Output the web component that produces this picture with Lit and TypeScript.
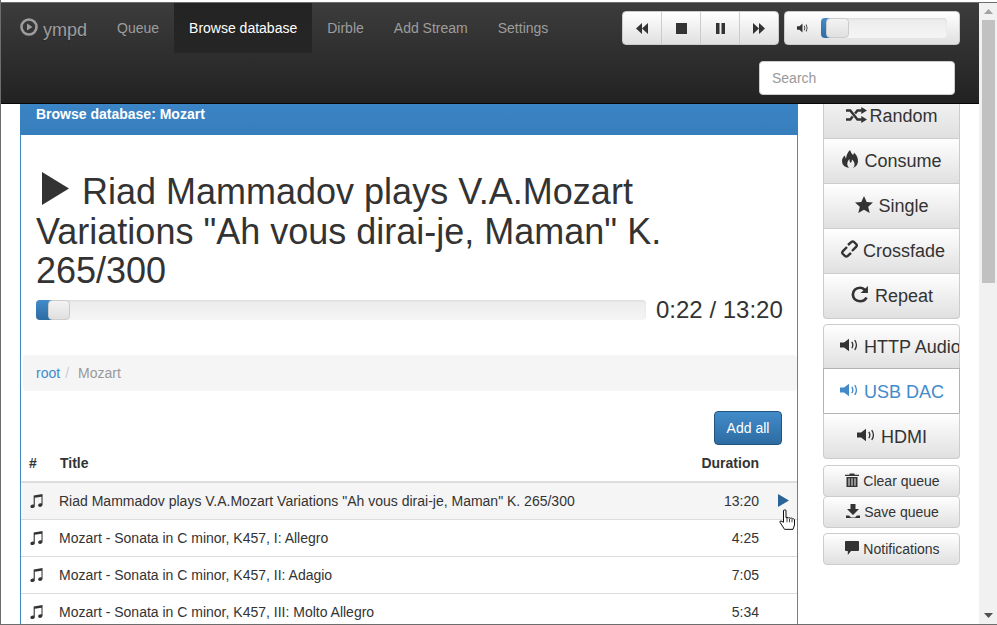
import { LitElement, html, css, svg } from "lit";
import { customElement } from "lit/decorators.js";

const ic = (vb: string, d: any, cls = "") => html`<svg class="ic ${cls}" viewBox="${vb}" fill="currentColor" preserveAspectRatio="none">${d}</svg>`;
const speaker = ic("0 0 16 14", svg`<path d="M0 4.500h3.600L8 .8v12.400L3.600 9.500H0z"/><path d="M10 4.200q1.600 2.800 0 5.600l1 .6q2-3.400 0-6.800zM12.600 2.400q2.800 4.600 0 9.200l1 .7q3.200-5.300 0-10.600z"/>`);
const play = ic("0 0 14 14", svg`<path d="M0 0L14 7L0 14z"/>`);
const shuffle = ic("0 0 22 16", svg`<g fill="none" stroke="currentColor" stroke-width="2.600"><path d="M0 3.500h4.500l7.500 9h4.500"/><path d="M0 12.500h4.500l2.500-3M9.500 6.500l2.500-3h4.500"/></g><path d="M16 0l6 3.500L16 7zM16 9l6 3.500L16 16z"/>`, "shuf");
const flame = ic("0 0 16 18", svg`<path d="M8 0q1 3 3 5 1-1 1-2.500 4 4 4 8.500 0 5-5 7 2-2 1.500-4.500Q12 11 10 9.500 10 12 8.500 13 7 11.500 7.500 9 5 11 5.200 14q.2 2.200 1.800 4Q0 16.500 0 11 0 7.500 3 5.500q0 2 1 3 .5-5 4-8.500z"/>`, "flame");
const star = ic("0 0 18 17", svg`<path d="M9 0l2.700 6 6.300.6-4.800 4.200 1.500 6.200L9 13.700 3.300 17l1.500-6.200L0 6.600 6.300 6z"/>`, "star");
const link = ic("0 0 17 18", svg`<g fill="none" stroke="currentColor" stroke-width="2.400"><path d="M7 5L10.500 1.900q1.200-1 2.400 0L15.300 4.200q1 1.200 0 2.400L11 11"/><path d="M10 13L6.500 16.100q-1.200 1-2.400 0L1.700 13.800q-1-1.200 0-2.400L6 7"/></g>`, "link");
const repeat = ic("0 0 17 18", svg`<path d="M8.500 1.500q3 0 5 2L16 1v7h-7l2.700-2.600Q10.300 4 8.500 4 3.500 4.300 3 9.500q.5 5.200 5.500 5.500 3.500 0 5-3l2.300 1Q13.800 17.500 8.500 17.500 1 17 .5 9.500 1 2 8.500 1.500z"/>`, "rep");
const trash = ic("0 0 14 16", svg`<path d="M4.500 2V.5h5V2H14v1.500H0V2zM1.500 4.500h11V16h-11zM3.500 6v8.500h1V6zM6.500 6v8.500h1V6zM9.500 6v8.500h1V6z" fill-rule="evenodd"/>`);
const download = ic("0 0 14 14", svg`<path d="M4.500 0h5v5H13L7 11 1 5h3.500zM0 11.500h3L5 13.500h4L11 11.500h3V14H0z"/>`);
const comment = ic("0 0 15 14", svg`<path d="M1 0h13q1 0 1 1v8q0 1-1 1H6.500L3 14v-4H1q-1 0-1-1V1q0-1 1-1z"/>`);
const note = ic("0 0 15 15", svg`<path d="M5 1.500L14.500 0v11.500c0 1.300-1.300 2.300-2.700 2.300-1.200 0-2-.7-2-1.700 0-1.200 1.300-2.100 2.600-2.100.4 0 .7 0 1 .2V3L6.200 4.100V13c0 1.200-1.300 2-2.600 2C2.300 15 1.500 14.300 1.500 13.300c0-1.200 1.300-2.100 2.600-2.100.4 0 .7.100.9.200z"/>`);

const rows = [
  ["Riad Mammadov plays V.A.Mozart Variations \"Ah vous dirai-je, Maman\" K. 265/300", "13:20"],
  ["Mozart - Sonata in C minor, K457, I: Allegro", "4:25"],
  ["Mozart - Sonata in C minor, K457, II: Adagio", "7:05"],
  ["Mozart - Sonata in C minor, K457, III: Molto Allegro", "5:34"],
];

@customElement("app-root")
export class AppRoot extends LitElement {
  static styles = css`
    :host { display: block; width: 997px; height: 625px; overflow: hidden; font-family: "Liberation Sans", Arial, sans-serif; color: #333; font-size: 14px; }
    * { box-sizing: border-box; }
    .win { width: 997px; height: 625px; display: flex; flex-direction: column; overflow: hidden; background: #fff; border-left: 1px solid #6d6d6d; border-bottom: 1px solid #6d6d6d; }
    .winTop { height: 3px; flex: none; background: linear-gradient(#fff 2px, #6d6d6d 2px); margin-left: -1px; }
    .main { flex: 1; display: flex; min-height: 0; }
    .page { width: 978px; flex: none; display: flex; flex-direction: column; overflow: hidden; }
    .scroll { width: 18px; flex: none; background: #f1f1f1; display: flex; flex-direction: column; align-items: center; }
    .arrow { height: 17px; display: flex; align-items: center; justify-content: center; width: 100%; }
    .thumb { height: 263px; width: 13px; background: #c1c1c1; }
    .spacer { flex: 1; }
    .ic { display: inline-block; vertical-align: middle; }

    nav { height: 101px; flex: none; background: linear-gradient(#3c3c3c, #222); border-bottom: 1px solid #080808; display: flex; }
    .left { display: flex; align-items: flex-start; flex: 1; }
    .brand { display: flex; align-items: center; gap: 5px; padding: 0 0 0 19px; width: 101px; height: 50px; color: #9d9d9d; font-size: 18px; text-shadow: 0 1px 0 rgba(0,0,0,.25); }
    .brand svg { width: 18px; height: 18px; margin-top: -3px; }
    .brand span { margin-top: 4px; }
    .tab { height: 50px; padding: 0 15px; display: flex; align-items: center; color: #9d9d9d; font-size: 14px; }
    .tab.on { color: #fff; background: linear-gradient(#232323, #262626); }
    .right { width: 358px; flex: none; display: flex; flex-direction: column; padding: 8px 0 0 0; }
    .ctl { display: flex; gap: 5px; margin-left: 1px; }
    .grp { display: flex; width: 157px; height: 34px; border-radius: 4px; border: 1px solid #ccc; background: linear-gradient(#fff, #e0e0e0); }
    .grp > div { flex: 1; display: flex; align-items: center; justify-content: center; border-right: 1px solid #ccc; color: #333; }
    .grp > div:last-child { border-right: 0; }
    .vol { width: 176px; height: 34px; border-radius: 4px; border: 1px solid #ccc; background: linear-gradient(#fff, #e0e0e0); display: flex; align-items: center; padding-left: 12px; gap: 13px; }
    .vol svg { width: 11px; height: 10px; color: #333; }
    .track { background: linear-gradient(#ebebeb, #f5f5f5); border-radius: 4px; position: relative; box-shadow: inset 0 1px 2px rgba(0,0,0,.08); }
    .fill { position: absolute; left: 0; top: 0; bottom: 0; background: linear-gradient(#428bca, #2d6ca2); border-radius: 4px 0 0 4px; }
    .knob { position: absolute; top: 0; bottom: 0; border-radius: 4px; border: 1px solid #ccc; background: linear-gradient(#f3f3f3, #e0e0e0); }
    .vol .track { width: 126px; height: 20px; }
    .search { margin: 16px 0 0 138px; width: 196px; height: 34px; background: #fff; border: 1px solid #ccc; border-radius: 4px; color: #999; font-size: 14px; display: flex; align-items: center; padding-left: 12px; }

    .body { display: flex; flex: 1; min-height: 0; padding-left: 19px; }
    .panel { width: 778px; flex: none; border: 1px solid #428bca; border-top: 0; border-bottom: 0; display: flex; flex-direction: column; }
    .ph { height: 31px; margin: 0 -1px; color: #fff; font-weight: bold; font-size: 14px; padding: 2px 16px 0; flex: none; background: linear-gradient(#3b84c5, #377ebc); }
    .now { padding: 37px 15px 0; }
    h1 { margin: 0; font-weight: 400; font-size: 36px; line-height: 39.600px; color: #333; }
    h1 svg { width: 27px; height: 33px; margin: -12px 3px 0 6px; color: #333; }
    .prog { display: flex; align-items: center; margin-top: 9px; }
    .prog .track { width: 610px; height: 20px; flex: none; }
    .time { font-size: 24px; margin-left: 10px; white-space: nowrap; line-height: 20px; }
    .crumb { margin: 35px 0 0 2px; height: 36px; background: #f5f5f5; border-radius: 4px; padding: 0 13px; display: flex; align-items: center; font-size: 14px; color: #999; flex: none; }
    .crumb a { color: #428bca; }
    .crumb i { font-style: normal; color: #ccc; padding: 0 5px; margin-right: 4px; }
    .add { display: flex; justify-content: flex-end; padding: 20px 15px 0; flex: none; }
    .btnp { height: 34px; width: 68px; display: flex; align-items: center; justify-content: center; color: #fff; border: 1px solid #245580; border-radius: 4px; background: linear-gradient(#428bca, #2d6ca2); font-size: 14px; }
    .hd { display: flex; height: 38px; font-weight: bold; font-size: 14px; align-items: center; border-bottom: 2px solid #ddd; flex: none; padding-top: 1px; }
    .hd .c2 { padding-left: 1px; }
    .c1 { width: 38px; padding-left: 8px; flex: none; }
    .c2 { flex: 1; white-space: nowrap; overflow: hidden; }
    .c3 { width: 70px; text-align: right; flex: none; }
    .c4 { width: 38px; flex: none; display: flex; align-items: center; padding-left: 19px; }
    .row { display: flex; align-items: center; height: 37px; border-bottom: 1px solid #ddd; font-size: 14px; flex: none; }
    .row.hov { background: #f5f5f5; }
    .row .c1 svg { width: 14px; height: 14px; display: block; }
    .row .c4 svg { width: 11px; height: 13px; color: #2a6496; }
    .hand { position: absolute; left: 779px; top: 509px; width: 17px; height: 23px; }

    .side { margin-left: 25px; width: 137px; flex: none; display: flex; flex-direction: column; }
    .bigs { display: flex; flex-direction: column; }
    .big { height: 45px; display: flex; align-items: center; justify-content: center; gap: 5px; font-size: 18px; border: 1px solid #ccc; border-top: 0; background: linear-gradient(#fff, #e0e0e0); color: #333; white-space: nowrap; overflow: hidden; padding-left: 1px; }
    .big svg { margin-top: -4px; flex: none; }
    .big .shuf { width: 21px; height: 16px; margin-right: -3px; }
    .big .flame { width: 16px; height: 18px; margin-right: 1px; }
    .big .star { width: 18px; height: 17px; }
    .big .link { width: 17px; height: 18px; margin-left: 2px; }
    .big .rep { width: 18px; height: 18px; margin-right: 1px; }
    .g1 .big:first-child { height: 35px; background: linear-gradient(#f1f1f1, #e0e0e0); align-items: flex-start; padding-top: 2px; }
    .g1 .big:first-child svg { margin-top: 1px; }
    .g1 .big:last-child { border-radius: 0 0 4px 4px; }
    .g2 { margin-top: 5px; }
    .g2 .big { border-top: 1px solid #ccc; height: 45px; padding-top: 1px; gap: 6px; }
    .g2 .big + .big { margin-top: -1px; height: 46px; padding-top: 2px; border-top-color: #b3b3b3; }
    .g2 .big:first-child { border-radius: 4px 4px 0 0; }
    .g2 .big:last-child { border-radius: 0 0 4px 4px; }
    .g2 .active { background: #fff; color: #428bca; border-color: #b3b3b3; }
    .g2 .http { justify-content: flex-start; padding-left: 16px; }
    .g2 svg { width: 18px; height: 14px; }
    .small { height: 32px; display: flex; align-items: center; justify-content: center; gap: 4px; font-size: 14px; border: 1px solid #ccc; border-radius: 4px; background: linear-gradient(#fff, #e0e0e0); color: #333; padding-left: 2px; }
    .small svg { width: 14px; height: 14px; margin-top: -2px; }
    .s1 { margin-top: 6px; }
    .s2 { margin-top: -1px; }
    .s3 { margin-top: 5px; }
  `;

  render() {
    return html`<div class="win"><div class="winTop"></div><div class="main">
      <div class="page">
        <nav>
          <div class="left">
            <div class="brand">${ic("0 0 18 18", svg`<circle cx="9" cy="9" r="7.500" fill="none" stroke="currentColor" stroke-width="2.600"/><path d="M7 5.500L12.500 9L7 12.500z"/>`)}<span>ympd</span></div>
            <div class="tab">Queue</div>
            <div class="tab on">Browse database</div>
            <div class="tab">Dirble</div>
            <div class="tab">Add Stream</div>
            <div class="tab">Settings</div>
          </div>
          <div class="right">
            <div class="ctl">
              <div class="grp">
                <div><svg class="ic" width="12" height="11" viewBox="0 0 12 12" fill="currentColor" preserveAspectRatio="none"><path d="M6 0v12L0 6zM12 0v12L6 6z"/></svg></div>
                <div><svg class="ic" width="11" height="11" viewBox="0 0 11 11" fill="currentColor"><path d="M0 0h11v11H0z"/></svg></div>
                <div><svg class="ic" width="9" height="11" viewBox="0 0 9 11" fill="currentColor"><path d="M0 0h3.500v11H0zM5.500 0H9v11H5.500z"/></svg></div>
                <div><svg class="ic" width="12" height="11" viewBox="0 0 12 12" fill="currentColor" preserveAspectRatio="none"><path d="M0 0l6 6-6 6zM6 0l6 6-6 6z"/></svg></div>
              </div>
              <div class="vol">${speaker}
                <div class="track"><div class="fill" style="width:10px"></div><div class="knob" style="left:5px;width:23px"></div></div>
              </div>
            </div>
            <div class="search">Search</div>
          </div>
        </nav>
        <div class="body">
          <div class="panel">
            <div class="ph">Browse database: Mozart</div>
            <div class="now">
              <h1>${play} Riad Mammadov plays V.A.Mozart Variations "Ah vous dirai-je, Maman" K. 265/300</h1>
              <div class="prog">
                <div class="track"><div class="fill" style="width:16px"></div><div class="knob" style="left:12px;width:22px"></div></div>
                <div class="time">0:22 / 13:20</div>
              </div>
            </div>
            <div class="crumb"><a>root</a><i>/</i>Mozart</div>
            <div class="add"><div class="btnp">Add all</div></div>
            <div class="hd"><div class="c1">#</div><div class="c2">Title</div><div class="c3">Duration</div><div class="c4"></div></div>
            ${rows.map((r, i) => html`<div class="row ${i === 0 ? "hov" : ""}"><div class="c1">${note}</div><div class="c2">${r[0]}</div><div class="c3">${r[1]}</div><div class="c4">${i === 0 ? play : ""}</div></div>`)}
          </div>
          <div class="side">
            <div class="bigs g1">
              <div class="big">${shuffle}Random</div>
              <div class="big">${flame}Consume</div>
              <div class="big">${star}Single</div>
              <div class="big">${link}Crossfade</div>
              <div class="big">${repeat}Repeat</div>
            </div>
            <div class="bigs g2">
              <div class="big http">${speaker}HTTP Audio</div>
              <div class="big active">${speaker}USB DAC</div>
              <div class="big">${speaker}HDMI</div>
            </div>
            <div class="small s1">${trash}Clear queue</div>
            <div class="small s2">${download}Save queue</div>
            <div class="small s3">${comment}Notifications</div>
          </div>
        </div>
      </div>
      <div class="scroll">
        <div class="arrow"><svg width="9" height="5" viewBox="0 0 9 5" fill="#a3a3a3"><path d="M4.500 0L9 5H0z"/></svg></div>
        <div class="thumb"></div>
        <div class="spacer"></div>
        <div class="arrow"><svg width="9" height="5" viewBox="0 0 9 5" fill="#505050"><path d="M0 0h9L4.500 5z"/></svg></div>
      </div>
      <svg class="hand" viewBox="0 0 17 26" preserveAspectRatio="none"><path d="M4.500 1.500q1.500-1 2.500 0V10l1-.5q1.200-.3 1.500.7 1.200-.7 2 .3 1.300-.5 2 .5 1.500-.3 2 1v6l-1.500 5H5.500L1 15q-.3-1.500 1-1.500l2.500 1.500z" fill="#fff" stroke="#000" stroke-width="1"/><path d="M8 10v5M10.500 11v4M13 11.500v3.500" stroke="#000" stroke-width=".8"/></svg>
    </div></div>`;
  }
}
